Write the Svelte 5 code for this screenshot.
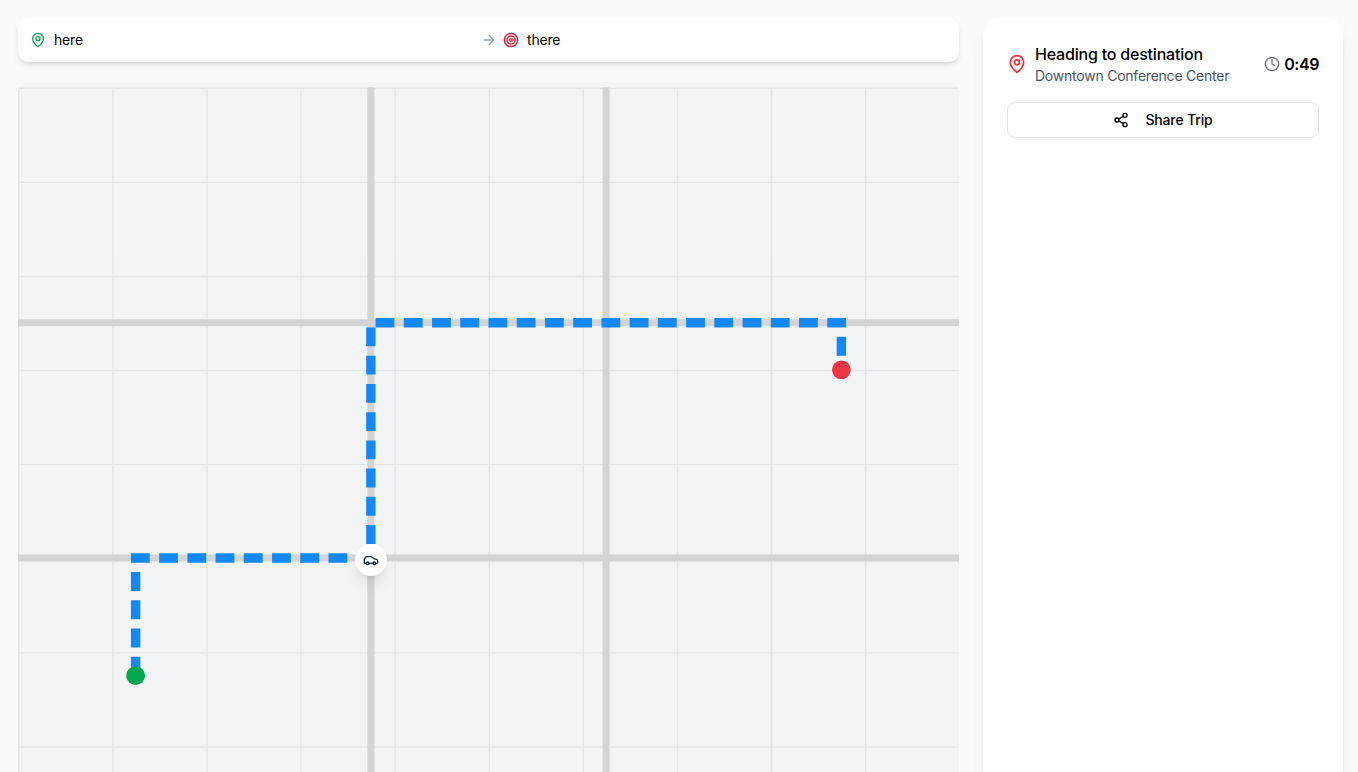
<script>
  const grid = [0, 10, 20, 30, 40, 50, 60, 70, 80, 90];
</script>

<div class="page">
  <main>
    <div class="route-bar">
      <div class="place">
        <svg class="icon green" viewBox="0 0 24 24"><path d="M20 10c0 4.993-5.539 10.193-7.399 11.799a1 1 0 0 1-1.202 0C9.539 20.193 4 14.993 4 10a8 8 0 0 1 16 0" /><circle cx="12" cy="10" r="3" /></svg>
        <span>here</span>
      </div>
      <svg class="icon muted" viewBox="0 0 24 24"><path d="M5 12h14M12 5l7 7-7 7" /></svg>
      <div class="place">
        <svg class="icon red" viewBox="0 0 24 24"><circle cx="12" cy="12" r="10" /><circle cx="12" cy="12" r="6" /><circle cx="12" cy="12" r="2" /></svg>
        <span>there</span>
      </div>
    </div>

    <div class="map">
      <svg class="streets" viewBox="0 0 100 100">
        {#each grid as g}
          <path class="grid" d="M{g + 0.08} 0V100M0 {g + 0.08}H100" />
        {/each}
        <path class="road" d="M0 25H100M0 50H100M37.5 0V100M62.5 0V100" />
        <path class="route" d="M12.5 62.5V50H37.5V25H87.5V30" />
        <circle cx="12.5" cy="62.5" r="1" fill="#00a84f" />
        <circle cx="87.5" cy="30" r="1" fill="#ef3646" />
      </svg>
      <div class="car">
        <svg class="icon" viewBox="0 0 24 24"><path d="M19 17h2c.6 0 1-.4 1-1v-3c0-.9-.7-1.7-1.5-1.9C18.7 10.6 16 10 16 10s-1.3-1.4-2.2-2.3c-.5-.4-1.1-.7-1.8-.7H5c-.6 0-1.1.4-1.4.9l-1.4 2.9A3.7 3.7 0 0 0 2 12v4c0 .6.4 1 1 1h2M9 17h6" /><circle cx="7" cy="17" r="2" /><circle cx="17" cy="17" r="2" /></svg>
      </div>
    </div>
  </main>

  <aside>
    <div class="status">
      <svg class="icon large" viewBox="0 0 24 24"><path d="M20 10c0 4.993-5.539 10.193-7.399 11.799a1 1 0 0 1-1.202 0C9.539 20.193 4 14.993 4 10a8 8 0 0 1 16 0" /><circle cx="12" cy="10" r="3" /></svg>
      <div class="heading">
        <div class="title">Heading to destination</div>
        <div class="subtitle">Downtown Conference Center</div>
      </div>
      <div class="time">
        <svg class="icon clock" viewBox="0 0 24 24"><circle cx="12" cy="12" r="10" /><path d="M12 6v6l4 2" /></svg>
        <span>0:49</span>
      </div>
    </div>
    <button>
      <svg class="icon" viewBox="0 0 24 24"><circle cx="18" cy="5" r="3" /><circle cx="6" cy="12" r="3" /><circle cx="18" cy="19" r="3" /><path d="m8.59 13.51 6.83 3.98M15.41 6.51l-6.82 3.98" /></svg>
      Share Trip
    </button>
  </aside>
</div>

<style>
  :global(body) {
    overflow: hidden;
  }
  .page {
    box-sizing: border-box;
    height: 772px;
    overflow: hidden;
    display: flex;
    align-items: flex-start;
    gap: 24px;
    padding: 18px 15px 0 18px;
    background: #f9fafb;
    color: #000;
    font: 400 14px/20px Inter, sans-serif;
    letter-spacing: -0.2px;
  }
  main {
    flex: 1;
    display: flex;
    flex-direction: column;
    gap: 20px;
  }
  .icon {
    flex: none;
    display: block;
    width: 16px;
    height: 16px;
    fill: none;
    stroke: currentColor;
    stroke-width: 2;
    stroke-linecap: round;
    stroke-linejoin: round;
  }
  .route-bar {
    display: grid;
    grid-template-columns: 1fr auto 1fr;
    align-items: center;
    gap: 6.5px;
    padding: 12px;
    border-radius: 10px;
    background: #fff;
    box-shadow: 0 4px 6px -1px rgb(0 0 0 / 0.1), 0 2px 4px -2px rgb(0 0 0 / 0.1);
  }
  .place {
    display: flex;
    align-items: center;
    gap: 8px;
  }
  .green {
    color: #00a650;
  }
  .red {
    color: #f0102a;
  }
  .muted {
    color: #99a1af;
  }
  .map {
    position: relative;
    height: 952px;
    border-radius: 10px;
    overflow: hidden;
    background: #f3f4f6;
  }
  .streets {
    display: block;
    width: 100%;
    height: 100%;
    fill: none;
  }
  .grid {
    stroke: #e5e5e5;
    stroke-width: 0.15;
  }
  .road {
    stroke: #d4d4d4;
    stroke-width: 0.75;
  }
  .route {
    stroke: #1388f8;
    stroke-width: 1;
    stroke-dasharray: 2 1;
  }
  .car {
    position: absolute;
    left: 337px;
    top: 462px;
    display: grid;
    place-items: center;
    width: 32px;
    height: 32px;
    border-radius: 50%;
    background: #fff;
    color: #1e2939;
    box-shadow: 0 10px 15px -3px rgb(0 0 0 / 0.1), 0 4px 6px -4px rgb(0 0 0 / 0.1);
  }
  aside {
    box-sizing: border-box;
    width: 360px;
    height: 1016px;
    padding: 24px;
    border-radius: 16px;
    background: #fff;
    box-shadow: 0 10px 15px -3px rgb(0 0 0 / 0.1), 0 4px 6px -4px rgb(0 0 0 / 0.1);
  }
  .status {
    display: flex;
    align-items: center;
    gap: 8px;
    margin-bottom: 16px;
  }
  .large {
    width: 20px;
    height: 20px;
    color: #fb2c36;
  }
  .heading {
    flex: 1;
  }
  .title {
    font-size: 16px;
    font-weight: 500;
    line-height: 24px;
  }
  .subtitle {
    color: #4a5565;
    letter-spacing: -0.23px;
  }
  .time {
    display: flex;
    align-items: center;
    gap: 4px;
    font-size: 16px;
    font-weight: 600;
    letter-spacing: -0.45px;
  }
  .clock {
    color: #6a7282;
  }
  button {
    display: flex;
    align-items: center;
    justify-content: center;
    gap: 16px;
    width: 100%;
    height: 36px;
    padding: 0;
    border: 1px solid #e5e5e5;
    border-radius: 8px;
    background: #fff;
    color: #000;
    font: 500 14px/20px Inter, sans-serif;
    letter-spacing: -0.14px;
  }
</style>
